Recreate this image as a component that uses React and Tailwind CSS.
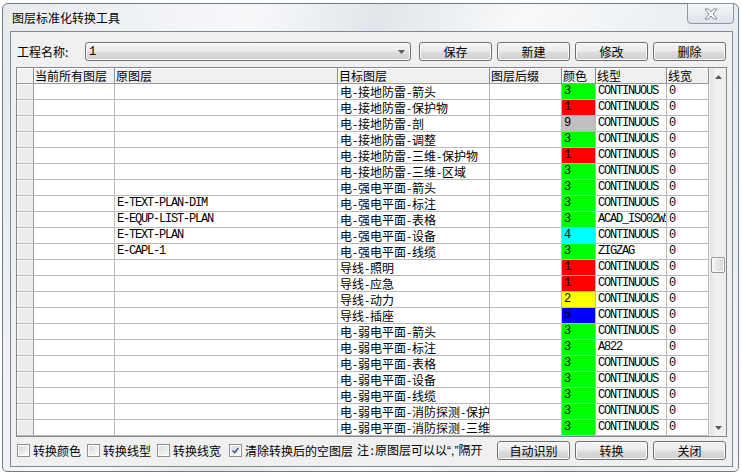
import React from "react";

const rows = [
  { src: "", tgt: "电-接地防雷-箭头", c: 3, lt: "CONTINUOUS" },
  { src: "", tgt: "电-接地防雷-保护物", c: 1, lt: "CONTINUOUS" },
  { src: "", tgt: "电-接地防雷-剖", c: 9, lt: "CONTINUOUS" },
  { src: "", tgt: "电-接地防雷-调整", c: 3, lt: "CONTINUOUS" },
  { src: "", tgt: "电-接地防雷-三维-保护物", c: 1, lt: "CONTINUOUS" },
  { src: "", tgt: "电-接地防雷-三维-区域", c: 3, lt: "CONTINUOUS" },
  { src: "", tgt: "电-强电平面-箭头", c: 3, lt: "CONTINUOUS" },
  { src: "E-TEXT-PLAN-DIM", tgt: "电-强电平面-标注", c: 3, lt: "CONTINUOUS" },
  { src: "E-EQUP-LIST-PLAN", tgt: "电-强电平面-表格", c: 3, lt: "ACAD_ISO02W100" },
  { src: "E-TEXT-PLAN", tgt: "电-强电平面-设备", c: 4, lt: "CONTINUOUS" },
  { src: "E-CAPL-1", tgt: "电-强电平面-线缆", c: 3, lt: "ZIGZAG" },
  { src: "", tgt: "导线-照明", c: 1, lt: "CONTINUOUS" },
  { src: "", tgt: "导线-应急", c: 1, lt: "CONTINUOUS" },
  { src: "", tgt: "导线-动力", c: 2, lt: "CONTINUOUS" },
  { src: "", tgt: "导线-插座", c: 5, lt: "CONTINUOUS" },
  { src: "", tgt: "电-弱电平面-箭头", c: 3, lt: "CONTINUOUS" },
  { src: "", tgt: "电-弱电平面-标注", c: 3, lt: "A822" },
  { src: "", tgt: "电-弱电平面-表格", c: 3, lt: "CONTINUOUS" },
  { src: "", tgt: "电-弱电平面-设备", c: 3, lt: "CONTINUOUS" },
  { src: "", tgt: "电-弱电平面-线缆", c: 3, lt: "CONTINUOUS" },
  { src: "", tgt: "电-弱电平面-消防探测-保护物", c: 3, lt: "CONTINUOUS" },
  { src: "", tgt: "电-弱电平面-消防探测-三维", c: 3, lt: "CONTINUOUS" },
];

const colorCls = {
  1: "bg-[#ff0000]",
  2: "bg-[#ffff00]",
  3: "bg-[#00ff00]",
  4: "bg-[#00ffff]",
  5: "bg-[#0000ff]",
  9: "bg-[#c0c0c0]",
};

const mono = "font-['Liberation_Mono',monospace] text-[12px] tracking-[-1.2px]";
const cell = "h-full border-r border-[#b9b9b9] overflow-hidden whitespace-nowrap pl-[2px] leading-[15px]";
const face =
  "h-[19px] rounded-[3px] border border-[#707070] bg-[linear-gradient(#f3f3f3_0%,#ebebeb_48%,#dddddd_52%,#cfcfcf_100%)] shadow-[inset_0_0_0_1px_#fbfbfb] flex items-center text-[12px] leading-none text-black";
const btn = face + " w-[73px] justify-center";

// CJK text where hyphens are half-width, like the dialog's bitmap font
function Mixed({ text }) {
  return text.split("-").map((p, i) => (
    <span key={i}>
      {i > 0 && <span className="inline-block w-[6px] text-center">-</span>}
      {p}
    </span>
  ));
}

function Checkbox({ label, checked }) {
  return (
    <div className="flex items-center gap-[3px]">
      <div className="w-[13px] h-[13px] border border-[#8e8f8f] bg-white p-[1px]">
        <div className="w-full h-full bg-[linear-gradient(135deg,#dcdcdc,#f8f8f8)] flex items-center justify-center">
          {checked && (
            <svg width="11" height="11" viewBox="0 0 11 11">
              <path d="M2 5.5 L4.5 8.2 L9 2.5" fill="none" stroke="#2a4ea0" strokeWidth="1.7" />
            </svg>
          )}
        </div>
      </div>
      <span className="text-[12px] leading-none">{label}</span>
    </div>
  );
}

function Arrow({ up }) {
  return (
    <svg width="7" height="4" viewBox="0 0 7 4">
      <path d={up ? "M0 4 L3.5 0 L7 4 Z" : "M0 0 L3.5 4 L7 0 Z"} fill="#5a5a5a" />
    </svg>
  );
}

export default function App() {
  return (
    <div className="w-[742px] h-[476px] bg-white overflow-hidden font-['Noto_Sans_CJK_SC',sans-serif] text-black">
      <div className="relative ml-[2px] mt-[3px] w-[737px] h-[469px] border border-[#707a86] rounded-t-[6px] rounded-b-[5px] bg-[linear-gradient(110deg,#e6eaee_0%,#f7f8fa_28%,#e2e6ea_42%,#f8f9fa_58%,#e8ecf0_80%,#f2f4f6_100%)] flex flex-col">
        {/* title bar */}
        <div className="h-[27px] flex items-center pl-[9px]">
          <span className="text-[12px] leading-none [text-shadow:0_0_6px_#ffffff]">图层标准化转换工具</span>
        </div>
        <div className="absolute right-[4px] top-[-1px] w-[47px] h-[21px] rounded-b-[4px] border border-[#8d97a2] bg-[linear-gradient(#f4f6f8,#dfe4e9)] flex items-center justify-center">
          <svg width="14" height="12" viewBox="0 0 14 12">
            <path
              d="M1 1 H4.5 L7 4 L9.5 1 H13 L9 6 L13 11 H9.5 L7 8 L4.5 11 H1 L5 6 Z"
              fill="#ffffff"
              stroke="#7d8791"
              strokeWidth="1"
              strokeLinejoin="round"
            />
          </svg>
        </div>

        {/* client area */}
        <div className="ml-[7px] mr-[5px] h-[436px] border border-[#7f8994] bg-[#f0f0f0] flex flex-col pt-[10px]">
          {/* toolbar */}
          <div className="h-[19px] flex items-center pl-[6px]">
            <span className="w-[68px] text-[12px] leading-none">工程名称:</span>
            <div className={face + " w-[326px] justify-between pl-[3px] pr-[5px]"}>
              <span className={mono}>1</span>
              <Arrow />
            </div>
            <div className="ml-[8px] flex gap-[5px]">
              <div className={btn}>保存</div>
              <div className={btn}>新建</div>
              <div className={btn}>修改</div>
              <div className={btn}>删除</div>
            </div>
          </div>

          {/* grid */}
          <div className="mt-[6px] ml-[5px] w-[711px] h-[370px] border border-[#828790] bg-white flex text-[12px]">
            <div className="w-[692px] flex flex-col">
              <div className="h-[16px] flex border-b border-[#9a9a9a] bg-[#f0f0f0] leading-[15px]">
                {[
                  ["w-[17px]", ""],
                  ["w-[81px]", "当前所有图层"],
                  ["w-[223px]", "原图层"],
                  ["w-[152px]", "目标图层"],
                  ["w-[72px]", "图层后缀"],
                  ["w-[34px]", "颜色"],
                  ["w-[71px]", "线型"],
                  ["w-[42px]", "线宽"],
                ].map(([w, t], i) => (
                  <div
                    key={i}
                    className={w + " h-full border-r border-[#8a8a8a] shadow-[inset_1px_1px_0_#ffffff] pl-[1px] overflow-hidden whitespace-nowrap"}
                  >
                    {t}
                  </div>
                ))}
              </div>
              {rows.map((r, i) => (
                <div key={i} className="h-[16px] flex border-b border-[#b9b9b9]">
                  <div className="w-[17px] h-full border-r border-[#9c9c9c] bg-[#ececec] shadow-[inset_1px_1px_0_#fafafa]" />
                  <div className={cell + " w-[81px]"} />
                  <div className={cell + " w-[223px] " + mono}>{r.src}</div>
                  <div className={cell + " w-[152px]"}>
                    <Mixed text={r.tgt} />
                  </div>
                  <div className={cell + " w-[72px]"} />
                  <div className={cell + " w-[34px] " + colorCls[r.c] + " " + mono}>{r.c}</div>
                  <div className={cell + " w-[71px] " + mono}>{r.lt}</div>
                  <div className={cell + " w-[42px] " + mono}>0</div>
                </div>
              ))}
            </div>
            {/* scrollbar */}
            <div className="w-[17px] flex flex-col bg-[linear-gradient(90deg,#e3e3e3,#f2f2f2_40%,#ececec)] border-l border-[#f8f8f8]">
              <div className="h-[17px] flex items-center justify-center">
                <Arrow up />
              </div>
              <div className="flex-1 pt-[172px] px-[1px]">
                <div className="h-[16px] rounded-[2px] border border-[#979797] bg-[linear-gradient(90deg,#f4f4f4,#e6e6e6_50%,#d6d6d6)] shadow-[inset_0_0_0_1px_#fbfbfb]" />
              </div>
              <div className="h-[17px] flex items-center justify-center">
                <Arrow />
              </div>
            </div>
          </div>

          {/* bottom bar */}
          <div className="mt-[4px] h-[19px] flex items-center pl-[6px] pr-[6px]">
            <div className="flex items-center gap-[6px]">
              <Checkbox label="转换颜色" />
              <Checkbox label="转换线型" />
              <Checkbox label="转换线宽" />
              <div className="ml-[2px]">
                <Checkbox label="清除转换后的空图层" checked />
              </div>
              <span className="ml-[-2px] text-[12px] leading-none whitespace-nowrap">
                注<span className="inline-block w-[6px] text-center">:</span>原图层可以以
                <span className="font-['Liberation_Sans',sans-serif]">“,”</span>隔开
              </span>
            </div>
            <div className="ml-auto flex gap-[5px]">
              <div className={btn}>自动识别</div>
              <div className={btn}>转换</div>
              <div className={btn}>关闭</div>
            </div>
          </div>
        </div>
      </div>
    </div>
  );
}
